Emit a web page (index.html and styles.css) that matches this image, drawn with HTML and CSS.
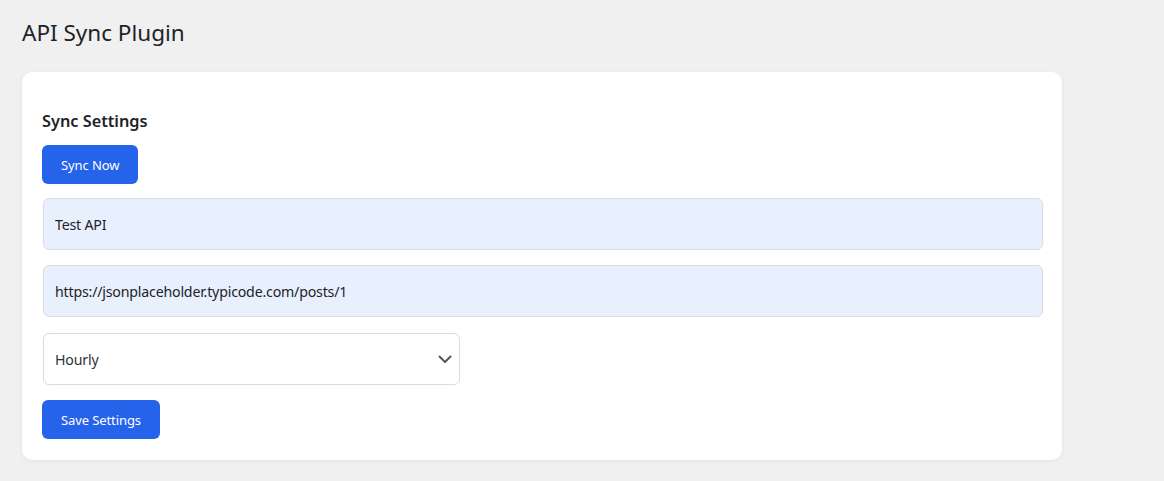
FILE: index.html
```html
<!DOCTYPE html>
<html lang="en">
<head>
<meta charset="utf-8">
<title>API Sync Plugin</title>
<link rel="stylesheet" href="styles.css">
</head>
<body>
<div class="wrap">
  <h1 class="page-title">API Sync Plugin</h1>
  <div class="card">
    <h2 class="card-title">Sync Settings</h2>
    <button class="btn" type="button">Sync Now</button>
    <div class="field autofilled">Test API</div>
    <div class="field autofilled">https://jsonplaceholder.typicode.com/posts/1</div>
    <div class="select">
      <span class="select-value">Hourly</span>
      <svg class="chevron" width="14" height="9" viewBox="0 0 14 9" aria-hidden="true"><path d="M1.5 1.5 L7 7 L12.5 1.5" fill="none" stroke="#50575e" stroke-width="2" stroke-linecap="round" stroke-linejoin="round"/></svg>
    </div>
    <button class="btn" type="button">Save Settings</button>
  </div>
</div>
</body>
</html>
```
FILE: styles.css
```css
* { box-sizing: border-box; }
html, body { margin: 0; padding: 0; }
body {
  background: #f0f0f0;
  font-family: "Noto Sans", "Open Sans", sans-serif;
  color: #1d2327;
  width: 1164px;
  height: 481px;
  overflow: hidden;
}
.wrap {
  padding: 17px 0 0 22px;
}
.page-title {
  margin: 0;
  font-size: 22.5px;
  font-weight: 400;
  line-height: 31px;
  color: #1d2327;
}
.card {
  margin-top: 24px;
  width: 1040px;
  background: #fff;
  border-radius: 10px;
  box-shadow: 0 1px 4px rgba(0, 0, 0, 0.06);
  padding: 20px 20px 21px 20px;
  display: flex;
  flex-direction: column;
  align-items: flex-start;
}
.card-title {
  margin: 17px 0 12px 0;
  font-size: 16.3px;
  font-weight: 600;
  line-height: 24px;
  color: #1d2327;
}
.btn {
  height: 39px;
  padding: 0 19px;
  border: none;
  border-radius: 6px;
  background: #2563eb;
  color: #fff;
  font-family: inherit;
  font-size: 13px;
  letter-spacing: -0.1px;
  cursor: pointer;
}
.field {
  margin: 14px 0 0 1px;
  width: 1000px;
  height: 52px;
  border: 1px solid #dcdcde;
  border-radius: 6px;
  padding: 0 11px;
  display: flex;
  align-items: center;
  font-size: 14.2px;
  letter-spacing: -0.2px;
  color: #1d2327;
}
.field + .field { margin-top: 15px; }
.autofilled { background: #e8f0fe; }
.select {
  position: relative;
  margin: 16px 0 15px 1px;
  width: 417px;
  height: 52px;
  border: 1px solid #dcdcde;
  border-radius: 6px;
  padding: 0 11px;
  display: flex;
  align-items: center;
  font-size: 14.2px;
  letter-spacing: -0.2px;
  color: #2c3338;
  background: #fff;
}
.chevron {
  position: absolute;
  right: 7px;
  top: 21px;
}
```
